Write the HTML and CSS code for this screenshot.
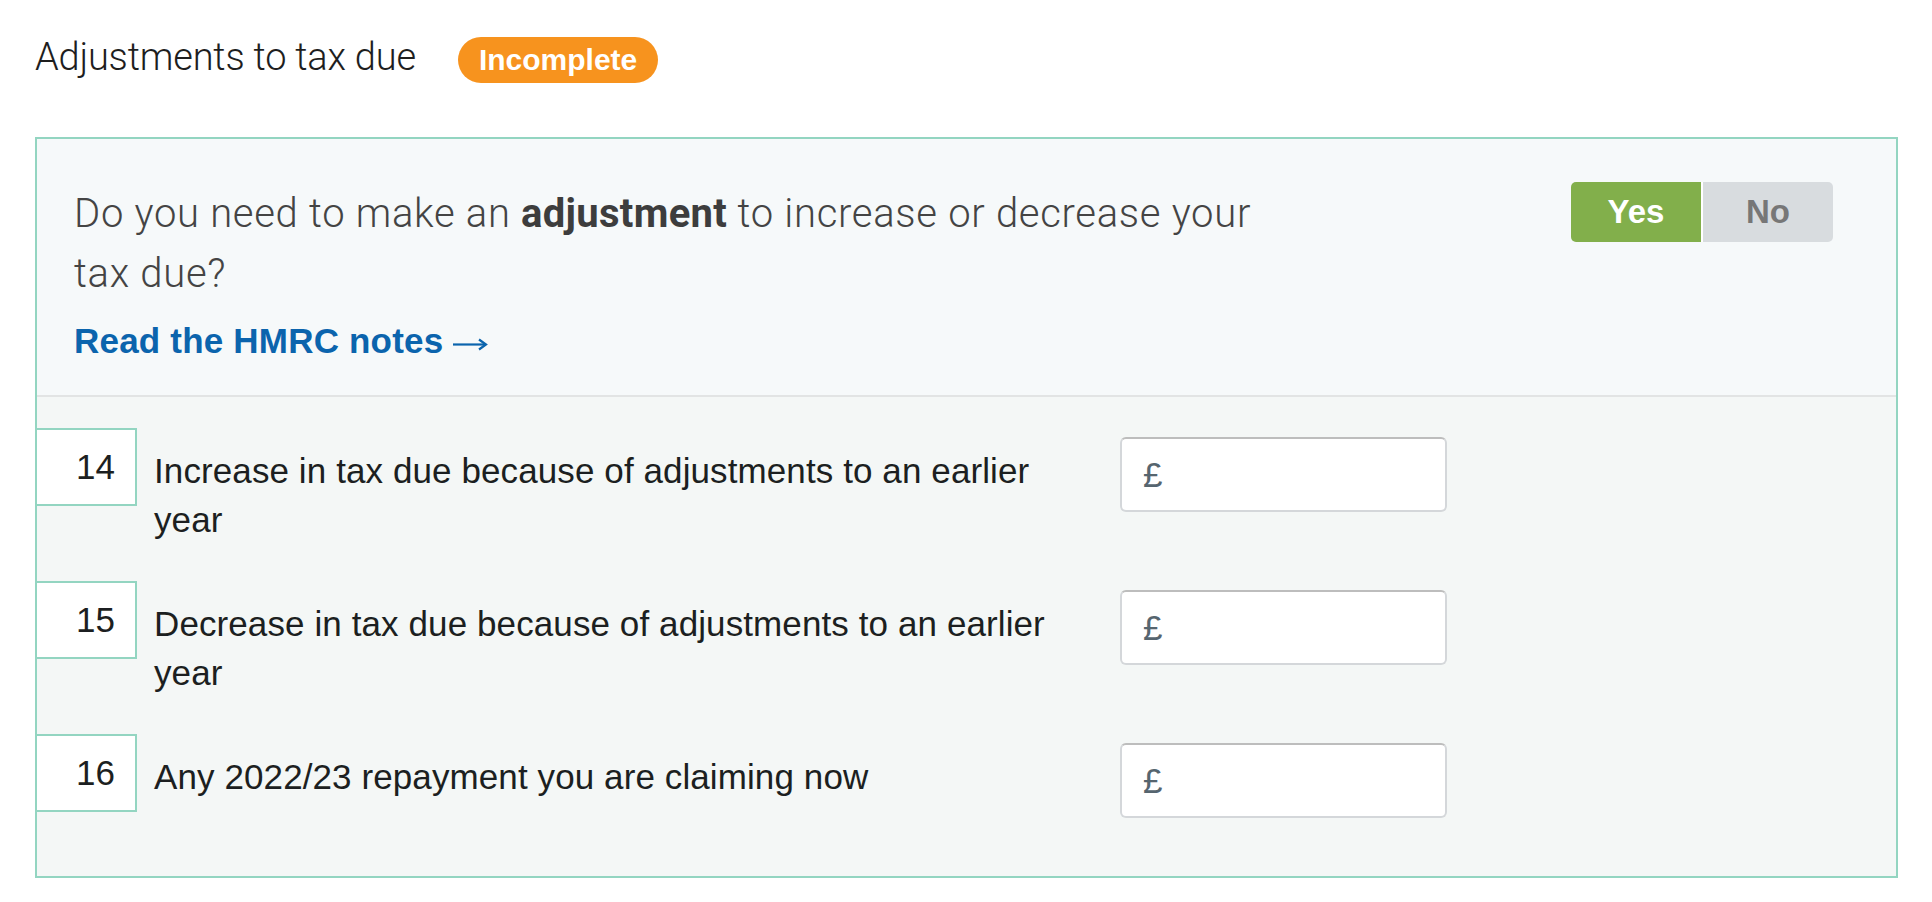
FILE: index.html
```html
<!DOCTYPE html>
<html lang="en">
<head>
<meta charset="utf-8">
<title>Adjustments to tax due</title>
<link rel="stylesheet" href="styles.css">
</head>
<body>
<div class="page">
  <header class="section-head">
    <h2 class="section-title">Adjustments to tax due</h2>
    <span class="badge">Incomplete</span>
  </header>

  <section class="panel">
    <div class="panel-top">
      <div class="question">
        <p class="question-text">Do you need to make an <strong>adjustment</strong> to increase or decrease your tax due?</p>
        <a class="notes-link" href="#">Read the HMRC notes<svg class="arrow" viewBox="0 0 36 14" width="36" height="14" aria-hidden="true"><path d="M1 7.5H33" stroke="#0b64ad" stroke-width="2.2" fill="none"/><path d="M27 2.5L34 7.5L27 12.5" stroke="#0b64ad" stroke-width="2.2" fill="none" stroke-linejoin="miter"/></svg></a>
      </div>
      <div class="toggle">
        <button class="toggle-btn toggle-yes" type="button">Yes</button>
        <button class="toggle-btn toggle-no" type="button">No</button>
      </div>
    </div>

    <div class="rows">
      <div class="row">
        <div class="box-num">14</div>
        <div class="row-label">Increase in tax due because of adjustments to an earlier year</div>
        <div class="money"><span class="currency">£</span></div>
      </div>
      <div class="row">
        <div class="box-num">15</div>
        <div class="row-label">Decrease in tax due because of adjustments to an earlier year</div>
        <div class="money"><span class="currency">£</span></div>
      </div>
      <div class="row">
        <div class="box-num">16</div>
        <div class="row-label">Any 2022/23 repayment you are claiming now</div>
        <div class="money"><span class="currency">£</span></div>
      </div>
    </div>
  </section>
</div>
</body>
</html>
```

FILE: styles.css
```css
* { box-sizing: border-box; }

html, body {
  margin: 0;
  padding: 0;
  background: #ffffff;
}

body {
  font-family: "Liberation Sans", Arial, sans-serif;
  color: #222;
}

.page {
  padding: 34px 34px 0 35px;
}

.section-head {
  display: flex;
  align-items: baseline;
  gap: 42px;
  height: 46px;
  margin-bottom: 57px;
}

.section-title {
  margin: 0;
  font-family: Roboto, "Liberation Sans", sans-serif;
  font-weight: 300;
  font-size: 38px;
  line-height: 46px;
  color: #1e1e1e;
  letter-spacing: -0.2px;
}

.badge {
  display: inline-block;
  height: 46px;
  line-height: 46px;
  padding: 0 21px;
  border-radius: 23px;
  background: #f7931e;
  color: #fff;
  font-weight: 700;
  font-size: 30px;
}

.panel {
  border: 2px solid #93d5c1;
  background: #f4f7f6;
}

.panel-top {
  display: flex;
  justify-content: space-between;
  align-items: flex-start;
  padding: 45px 63px 30px 37px;
  background: #f6f9fa;
  border-bottom: 2px solid #e2e4e4;
}

.question {
  flex: 0 1 1210px;
}

.question-text {
  margin: 0 0 13px;
  font-family: Roboto, "Liberation Sans", sans-serif;
  font-weight: 300;
  font-size: 40px;
  line-height: 60px;
  letter-spacing: 0.7px;
  color: #444;
}

.question-text strong {
  font-weight: 700;
  color: #3d3d3d;
  letter-spacing: 0.3px;
}

.notes-link {
  display: inline-flex;
  align-items: center;
  gap: 9px;
  font-weight: 700;
  font-size: 35px;
  line-height: 48px;
  letter-spacing: 0.2px;
  color: #0b64ad;
  text-decoration: none;
}

.arrow {
  display: block;
  margin-top: 6px;
}

.toggle {
  display: flex;
  margin-top: -2px;
  border-radius: 5px;
  overflow: hidden;
}

.toggle-btn {
  width: 130px;
  height: 60px;
  border: 0;
  margin: 0;
  padding: 0;
  font-family: "Liberation Sans", Arial, sans-serif;
  font-weight: 700;
  font-size: 33px;
}

.toggle-yes {
  background: #82af4b;
  color: #fff;
}

.toggle-no {
  background: #d8dcdf;
  color: #777;
  border-left: 2px solid #fff;
  width: 132px;
}

.rows {
  display: flex;
  flex-direction: column;
  gap: 37px;
  padding: 31px 0 58px;
}

.row {
  display: flex;
  align-items: flex-start;
}

.box-num {
  flex: 0 0 100px;
  height: 78px;
  display: flex;
  align-items: center;
  justify-content: flex-end;
  padding-right: 20px;
  background: #fff;
  border: 2px solid #93d5c1;
  border-left: 0;
  font-size: 35px;
  color: #1c1f21;
}

.row-label {
  flex: 0 0 920px;
  margin-left: 17px;
  padding-top: 18px;
  font-size: 35px;
  line-height: 49px;
  letter-spacing: 0.1px;
  color: #1c1f21;
}

.money {
  flex: 0 0 327px;
  height: 75px;
  margin-left: 46px;
  margin-top: 9px;
  display: flex;
  align-items: center;
  padding-left: 21px;
  background: #fff;
  border: 2px solid #d4d7da;
  border-top-color: #bdbdbd;
  border-radius: 6px;
}

.currency {
  font-size: 35px;
  color: #56656f;
}
```
